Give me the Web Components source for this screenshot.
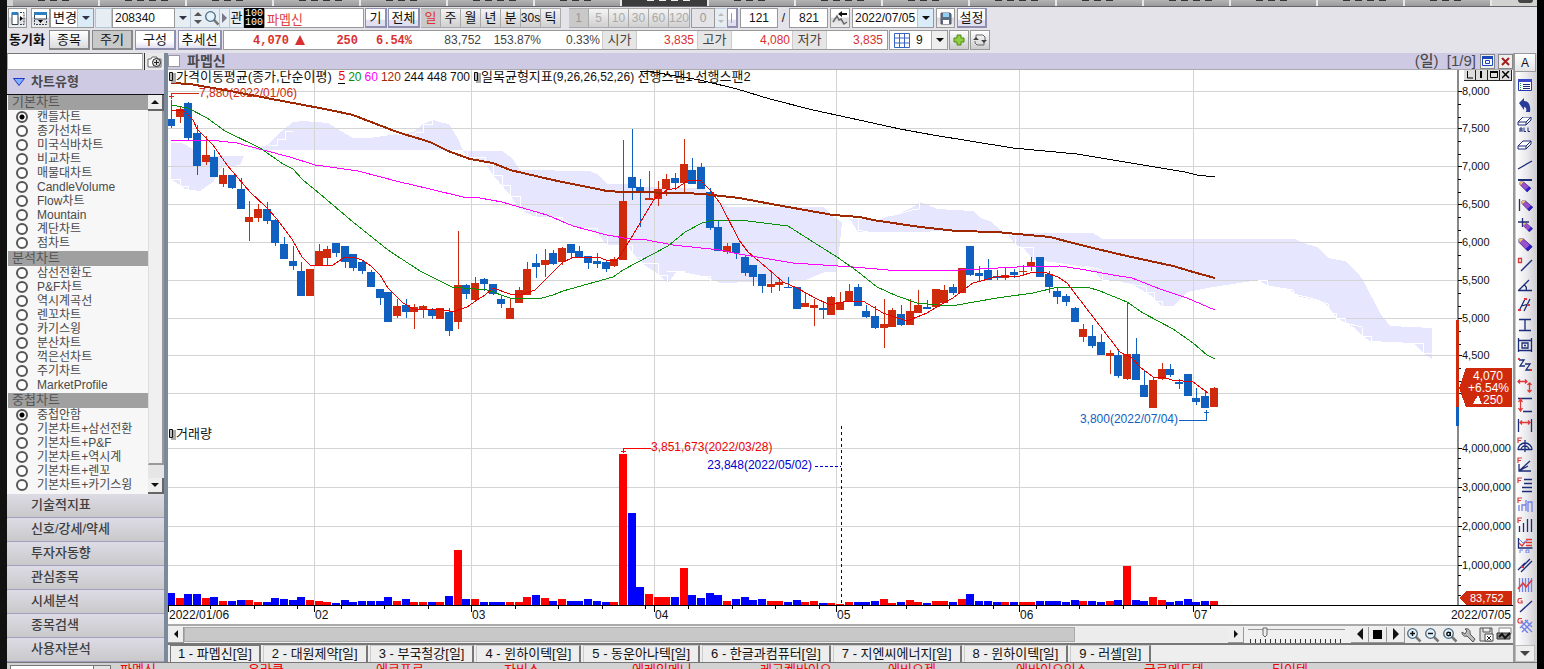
<!DOCTYPE html>
<html lang="ko">
<head>
<meta charset="utf-8">
<title>종합차트</title>
<style>
html,body{margin:0;height:100%;background:#000}
body{font:12px/14px "Liberation Sans","Noto Sans CJK KR",sans-serif;color:#111;overflow:hidden}
</style>
</head>
<body>
<hts-app></hts-app>
<script>
const base = `
*{box-sizing:border-box}
button,input,select{font:inherit;color:inherit;margin:0;padding:0;border-radius:0;outline:0}
button{display:flex;align-items:center;justify-content:center;white-space:nowrap;overflow:hidden;cursor:pointer}
select{appearance:none;background:none;border:0}
svg{display:block;flex:none}
.ko{font-size:13px}
`;
const define = (name, css, html, ready) => customElements.define(name, class extends HTMLElement {
  constructor() {
    super();
    this.attachShadow({mode: 'open'}).innerHTML = `<style>${base}${css}</style>${html}`;
  }
  connectedCallback() { if (ready) ready(this, this.shadowRoot); }
});
const tri = (dir, w = 8, c = '#111') => {
  const h = w / 2;
  const d = {down: `M0 0H${w}L${h} ${h}z`, up: `M0 ${h}H${w}L${h} 0z`, left: `M${h} 0V${w}L0 ${h}z`, right: `M0 0V${w}L${h} ${h}z`}[dir];
  const v = dir === 'down' || dir === 'up';
  return `<svg width="${v ? w : h}" height="${v ? h : w}"><path d="${d}" fill="${c}"/></svg>`;
};

/* Menu tabs along the upper edge */
define('menu-tabs', `
:host{display:flex;height:7px;background:#d2d2d0;border-bottom:1px solid #666;padding-left:6px;overflow:hidden}
i{flex:0 1 87px;border-right:2px solid #e8e8e8;background:linear-gradient(#b4b4b4,#9a9a9a);display:flex;gap:5px;padding-left:25px}
i.on{background:#3c3c3c} b{width:7px;height:1px;background:#333} i.on b{background:#eee}
u{flex:none;width:15px;height:3px;margin-left:26px;border-radius:0 0 4px 4px;background:#444}`,
  Array.from({length: 17}, (_, n) => `<i class="${n === 7 ? 'on' : ''}">${'<b></b>'.repeat(3 + n % 2)}</i>`).join('') + '<u></u>');

/* Code, period and range controls */
const mag = (inner = '') => `<svg width="16" height="16" viewBox="0 0 16 16"><path d="M9.500 9.500l5 5" stroke="#777" stroke-width="2.500"/><circle cx="6.500" cy="6.500" r="4.800" fill="#e4f2fa" stroke="#4a6a80" stroke-width="1.300"/>${inner}</svg>`;
define('code-toolbar', `
:host{display:flex;height:20px;padding-left:1px;white-space:nowrap}
:host>*{flex:none}
.g1{width:1px}.g2{width:2px}.g4{width:4px}.g8{width:8px}
button{background:linear-gradient(#fff 45%,#d9d9dc 50%,#eee);border:1px solid #999;height:20px}
button.p{border-color:#8f8fb0;border-width:1px 2px 2px 1px;background:linear-gradient(#fff 60%,#e0e0f2 65%)}
input{width:100%;border:1px solid #999;background:#fff;height:20px;padding:0 4px}
.combo{position:relative;display:flex;border:1px solid #999;background:#fff;height:20px}
.combo select{width:100%;padding-left:2px}
.combo i{position:absolute;right:0;top:0;bottom:0;width:16px;background:#d9ecf8;border-left:1px solid #b5c6d2;display:grid;place-items:center;pointer-events:none}
.grp{display:flex}.grp button{width:20px;border-width:1px 1px 1px 0;border-color:#aaa;background:linear-gradient(#f4f4f4,#d0d0d0)}
.grp button.on{background:#c9c9c9;color:#e03030}
.grp.off button{color:#aaa}.grp.off button.on{color:#999}
.spin{display:flex;flex-direction:column;justify-content:space-evenly;align-items:center;background:#e6eef4;border:1px solid #b5c6d2;border-width:1px 0}
.flat{background:#e6eef4;border:1px solid #b5c6d2;border-width:1px 1px 1px 0}
.inv{background:#000;color:#fff;font:10px/9px "Liberation Mono",monospace;text-align:center;padding-top:1px}`, `
<button style="width:19px" aria-label="왼쪽 창"><svg width="15" height="15"><path d="M2 1.500h6v12H2z" fill="#fff" stroke="#345"/><path d="M2 1h6v3H2z" fill="#2c7fc0"/><path d="M10 1.500h4v12h-4" fill="none" stroke="#345" stroke-dasharray="2 1"/><path d="M10 5l3 2.500-3 2.500z"/></svg></button><span class="g4"></span>
<button style="width:19px" aria-label="위쪽 창"><svg width="15" height="15"><path d="M1.500 2h12v6h-12z" fill="#fff" stroke="#345"/><path d="M1 1h13v3H1z" fill="#2c7fc0"/><path d="M1.500 9v4.500h12V9" fill="none" stroke="#345" stroke-dasharray="2 1"/><path d="M5 9h5l-2.500 3z"/></svg></button>
<label class="combo" style="width:44px"><select class="ko" aria-label="변경"><option>변경</option></select><i>${tri('down', 8, '#334')}</i></label><span class="g1"></span>
<span class="flat" style="width:17px;border-left-width:1px"></span>
<span style="width:63px"><input aria-label="종목코드" value="208340" style="padding:0 2px"></span>
<button class="flat" style="width:16px" aria-label="목록">${tri('down', 8, '#334')}</button>
<span class="spin" style="width:14px">${tri('up', 8, '#555')}${tri('down', 8, '#555')}</span>
<button class="flat" style="width:15px" aria-label="검색">${mag()}</button>
<button class="flat" style="width:10px" aria-label="다음">${tri('right', 10, '#778')}</button>
<button class="flat ko" style="width:14px">관</button>
<span class="inv" style="width:20px">100<br>100</span>
<span style="width:100px"><input class="ko" aria-label="종목명" value="파멥신" style="color:#e04040;padding:0 2px"></span><span class="g1"></span>
<button class="p ko" style="width:22px">기</button><span class="g1"></span>
<button class="p ko" style="width:32px">전체</button><span class="g1"></span>
<span class="grp"><button class="on ko">일</button><button class="ko">주</button><button class="ko">월</button><button class="ko">년</button><button class="ko">분</button><button>30s</button><button class="ko">틱</button></span><span class="g8"></span>
<span class="grp off"><button class="on">1</button><button>5</button><button>10</button><button>30</button><button>60</button><button style="width:21px">120</button></span><span class="g1"></span>
<span style="width:24px"><input aria-label="틱 값" value="0" style="background:#e4e4e8;color:#999;text-align:center"></span>
<span class="spin" style="width:11px">${tri('up', 6, '#bbb')}${tri('down', 6, '#bbb')}</span><span class="g1"></span>
<button class="p" style="width:11px" aria-label="이동"><svg width="2" height="10"><path d="M0 0h1v10H0z" fill="#99a"/></svg></button><span class="g2"></span>
<span style="width:38px"><input aria-label="표시 개수" value="121" style="text-align:center"></span>
<span style="width:11px;text-align:center;line-height:20px">/</span>
<span style="width:39px"><input aria-label="전체 개수" value="821" style="text-align:right;padding-right:8px"></span><span class="g2"></span>
<button style="width:20px" aria-label="되돌리기"><svg width="16" height="16"><path d="M1 12l4-6 2 4 2-1 3 5 3-2" fill="none" stroke="#666" stroke-width="1.500"/><path d="M8 4h7" stroke="#111" stroke-width="2"/><path d="M6 4l4-3v6z" fill="#111"/></svg></button><span class="g2"></span>
<label class="combo" style="width:82px"><select aria-label="날짜"><option>2022/07/05</option></select><i>${tri('down')}</i></label><span class="g2"></span>
<button style="width:19px" aria-label="저장"><svg width="12" height="13"><path d="M1 1h9l1 1v10H1z" fill="#5d6c80" stroke="#556"/><path d="M3 1h6v4H3z" fill="#8fd0f4"/><path d="M3 8h6v4H3z" fill="#fff"/></svg></button><span class="g2"></span>
<button class="p ko" style="width:30px">설정</button>`);

/* Price summary line */
define('quote-bar', `
:host{display:flex;height:20px;white-space:nowrap;line-height:18px}
:host>*{flex:none}
.sync{width:42px;font-weight:bold;padding-left:2px;line-height:20px}
.b{display:flex;gap:2px}
.b button{height:20px;width:41px;background:linear-gradient(#fff,#dcdce0);border:1px solid #888;border-width:1px 2px 2px 1px}
.b button.on{background:#c9c9c9}.b button.p{background:linear-gradient(#fff 60%,#e0e0f2);border-color:#8f8fb0}.b button.w{width:44px}
.q{display:flex;width:665px;margin-left:1px;background:#fff;border:1px solid #999;color:#444}
.q span{text-align:right}
.red{color:#d83030}.bold{font:bold 12px/20px "Liberation Mono",monospace;color:#d83030}
.q .l{width:35px;text-align:center;background:#e6e6e6;border:1px solid #ccc;border-width:0 1px}
.c{position:relative;width:59px;border:1px solid #999;background:#fff;display:flex;align-items:center;padding-left:4px}
.c select{width:48px;padding-left:6px}.c i{position:absolute;right:0;top:0;bottom:0;width:16px;border-left:1px solid #aaa;background:#eee;display:grid;place-items:center;pointer-events:none}
.n{width:20px;height:20px;background:linear-gradient(#fff,#ccc);border:1px solid #999;margin-left:1px}`, `
<span class="sync ko">동기화</span>
<span class="b ko"><button>종목</button><button class="on">주기</button><button class="p">구성</button><button class="p w">추세선</button></span>
<div class="q"><span class="bold" style="width:65px">4,070</span><span style="width:16px;display:grid;place-items:center end"><svg width="10" height="10"><path d="M5 0l5 10H0z" fill="#d83030"/></svg></span><span class="bold" style="width:53px">250</span><span class="bold" style="width:54px">6.54%</span><span style="width:69px">83,752</span><span style="width:60px">153.87%</span><span style="width:59px">0.33%</span><span style="width:2px"></span><span class="l ko">시가</span><span class="red" style="width:57px">3,835</span><span style="width:3px"></span><span class="l ko">고가</span><span class="red" style="width:58px">4,080</span><span style="width:2px"></span><span class="l ko">저가</span><span class="red" style="width:56px">3,835</span></div>
<label class="c" style="margin-left:1px"><svg width="16" height="15"><path d="M.5.500h15v14H.500zM5.500 0v15M10.500 0v15M0 5h16M0 10h16" fill="none" stroke="#3a62c8"/></svg><select aria-label="화면 개수"><option>9</option></select><i>${tri('down')}</i></label>
<button class="n" aria-label="추가"><svg width="12" height="12"><path d="M4 1h4v3h3v4H8v3H4V8H1V4h3z" fill="#8fd03c" stroke="#4b8a1c"/></svg></button>
<button class="n" aria-label="새로고침"><svg width="14" height="14"><path d="M3 6V2h7l2 2v3M11 8v4H4l-2-2V8" fill="none" stroke="#666"/><path d="M0 7h6L3 4zM8 7h6l-3 3z" fill="#444"/></svg></button>`);

/* Chart type list and accordion */
const groups = [
  ['기본차트', ['캔들차트', '종가선차트', '미국식바차트', '비교차트', '매물대차트', 'CandleVolume', 'Flow차트', 'Mountain', '계단차트', '점차트']],
  ['분석차트', ['삼선전환도', 'P&amp;F차트', '역시계곡선', '렌꼬차트', '카기스윙', '분산차트', '꺽은선차트', '주기차트', 'MarketProfile']],
  ['중첩차트', ['중첩안함', '기본차트+삼선전환', '기본차트+P&amp;F', '기본차트+역시계', '기본차트+렌꼬', '기본차트+카기스윙']]];
define('side-panel', `
:host{display:flex;flex-direction:column;background:#f7f7f7;min-height:0;overflow:hidden;color:#4a4a4a}
.s{display:flex;height:17px;flex:none;background:#e3e3e9}
.s input{flex:1;min-width:0;border:1px solid #aaa;border-top-color:#777;background:#fff}
.s button{width:20px;border:0;border-left:1px solid #333;background:#e9e9ec;margin-left:1px}
h2{margin:0;flex:none;height:25px;background:#cfcae4;border-bottom:1px solid #111;font-size:13px;line-height:22px;padding-left:6px;display:flex;align-items:center;gap:6px}
.list{flex:1 1 0;display:flex;min-height:0}
.in{flex:1;overflow:hidden;padding-left:1px}
fieldset{border:0;margin:0 0 1px;padding:0;min-width:0}
legend{float:left;width:100%;height:15px;background:#a0a0a0;padding:0 4px;line-height:13px;font-size:13px;color:#555}
label{clear:both;display:flex;align-items:center;height:14px;white-space:nowrap;padding-left:8px;gap:9px}
input[type=radio]{appearance:none;width:12px;height:12px;border:2px solid #555;border-radius:50%;background:#fff;flex:none}
input[type=radio]:checked{background:radial-gradient(#000 0 2px,#fff 3px)}
.sb{width:16px;display:flex;flex-direction:column;background:#f0f0f0}
.sb button{height:16px;flex:none;background:#eee;border:1px solid #666;border-width:0 2px 2px 0}
.sb i{flex:1;border:1px solid #999;border-width:0 2px 2px 1px;border-left-color:#ddd;background:#f0f0f0}.sb b{height:13px;background:#e6e6e6}
.acc{flex:none}.acc button{width:100%;height:24px;border:0;border-bottom:1px solid #a39fc0;background:linear-gradient(#dddbe4,#c9c9cb);justify-content:flex-start;padding-left:24px;padding-bottom:2px;font-size:13px;font-weight:500;color:#3f3f3f}`, `
<div class="s"><input aria-label="차트 검색"><button aria-label="검색"><svg width="16" height="13"><path d="M1 4h3l1-2h5v2h4v8H1z" fill="#fff" stroke="#666"/><circle cx="9.500" cy="7.500" r="4" fill="#ddd" stroke="#222"/><path d="M7 7.500h5M9.500 5v5" stroke="#222"/></svg></button></div>
<h2><svg width="12" height="9"><path d="M.5.500h11l-5.500 7z" fill="#7fb0ff" stroke="#2038c0"/></svg>차트유형</h2>
<div class="list"><div class="in">${groups.map(([t, a], g) => `<fieldset><legend>${t}</legend>${a.map((s, n) => `<label><input type="radio" name="g${g}" ${n || g === 1 ? '' : 'checked'}>${s}</label>`).join('')}</fieldset>`).join('')}</div>
<div class="sb"><button aria-label="위로">${tri('up')}</button><i></i><b></b><button aria-label="아래로">${tri('down')}</button></div></div>
<div class="acc">${['기술적지표', '신호/강세/약세', '투자자동향', '관심종목', '시세분석', '종목검색', '사용자분석'].map(s => `<button>${s}</button>`).join('')}</div>`);

/* Daily bars: direction, high, body top, body bottom, low */
const bars = `b100,119,126,128 r107,109,117,123 b102,103,138,141 b125,133,166,175 r136,155,162,165 b150,157,177,177 r168,175,184,187 b175,175,188,189 b178,189,209,209 r201,217,222,241 r204,209,218,222 b202,209,221,224 b219,220,243,246 b237,244,259,259 b246,261,266,270 b262,271,296,296 r269,269,296,296 r244,251,266,266 r246,249,258,266 b243,243,253,257 b246,246,262,268 b254,254,268,271 b260,262,271,274 b270,272,287,287 b289,289,298,305 b292,292,322,322 r299,306,316,318 b299,305,312,318 r304,307,312,329 r305,306,309,318 b308,309,316,319 r308,308,319,319 b308,312,331,336 r231,285,322,329 b284,285,294,299 r277,283,300,302 b278,279,284,291 b284,284,294,295 b296,299,304,308 r298,308,319,319 r287,290,303,303 r262,269,295,295 b254,263,267,278 r249,260,265,277 b250,253,264,265 r247,248,262,265 b244,244,253,258 b246,251,257,257 b256,256,263,269 b253,261,264,268 b261,262,269,272 r257,259,266,267 r140,201,260,260 b129,177,188,200 b179,187,191,227 r171,198,200,200 r181,189,199,206 r174,179,189,196 b173,178,183,190 r139,164,183,193 b158,170,184,184 b163,167,189,189 b188,192,228,230 b221,227,251,251 r243,246,252,254 b243,243,253,259 b255,257,273,276 b265,265,277,286 b274,274,286,293 r272,284,287,293 r278,282,285,291 b277,287,288,288 b287,287,309,309 r293,303,307,307 r299,305,308,326 b302,308,310,319 r296,297,315,315 r292,302,310,310 r284,291,302,302 b284,287,306,306 b305,311,317,318 b306,316,328,329 r299,324,328,348 r308,310,327,327 b305,314,325,326 r299,311,325,325 r290,305,313,313 b300,307,309,309 r289,289,307,307 r285,290,303,303 b284,287,293,295 r268,268,293,293 b246,246,275,276 b266,273,276,281 b259,270,280,280 b270,276,278,280 r267,275,278,280 b269,272,275,278 r265,271,272,276 r257,262,267,271 b257,257,277,277 b271,274,287,293 b287,291,297,304 b294,296,302,306 b307,308,322,322 r324,329,337,342 b325,336,346,348 b334,342,355,355 r350,353,356,374 b350,355,376,378 r302,354,379,380 b338,354,380,380 b371,385,397,397 r378,380,408,408 r363,369,379,380 b364,369,375,377 b379,382,384,389 b374,374,396,396 b388,398,402,405 b390,396,408,408 r387,388,407,407`.split(' ');
const volumes = 'b12 r7 b11 b11 r7 b8 r4 b4 b5 r5 r3 b3 b7 b6 b5 b8 r5 r4 r3 b2 b5 b3 b4 b4 b4 b8 r4 b6 r3 r3 b3 r3 b9 r55 b6 r6 b3 b3 b3 r3 r3 r8 b10 r7 b4 r6 b4 b4 b6 b4 b3 r3 r151 b92 b18 r11 r8 r8 b8 r37 b10 b7 b12 b10 r4 b6 b8 b5 b6 r4 r4 b3 b5 r3 r4 b2 r2 r1 r3 b3 b3 b4 r6 r2 b3 r5 r3 b2 r4 r4 b3 r6 b11 b4 b4 b3 r3 b3 r3 r3 b4 b4 b4 b3 b5 r4 b4 b3 r4 b5 r39 b5 b4 r8 r5 b3 b4 b6 b3 b4 r4'.split(' ');
const lines = [
  ['#000', 1, '640,71 648,71 670,75 700,80 737,89 770,99 813,110 850,118 900,129 933,135 1013,148 1077,154 1119,161 1185,172 1197,175 1215,177'],
  ['#a02800', 2, '171,83 190,84 230,91 277,100 330,110 353,115 397,132 430,142 448,151 470,159 493,163 510,170 553,180 607,191 623,192 687,193 713,195 739,198 788,207 833,215 860,217 873,220 920,227 957,231 997,232 1017,234 1050,237 1073,243 1097,249 1127,256 1173,266 1193,272 1215,278'],
  ['#f0f', 1, '171,140 210,140 237,143 263,150 290,157 315,165 330,167 358,171 400,182 430,189 463,197 480,198 502,202 547,215 573,226 607,235 630,239 647,240 673,245 720,250 739,254 793,263 853,267 900,271 960,270 1017,267 1060,266 1080,269 1119,276 1132,278 1160,289 1187,298 1215,310'],
  ['#089008', 1, '171,105 188,108 207,118 225,131 260,148 283,164 293,169 303,180 320,194 353,222 388,250 420,271 452,287 487,290 510,298 520,299 542,298 553,295 563,291 613,277 623,270 653,254 668,246 685,232 702,223 713,220 740,220 788,226 810,240 837,257 857,271 877,287 897,296 917,303 938,305 957,305 997,298 1033,293 1058,287 1087,287 1100,291 1127,302 1143,313 1173,329 1193,343 1207,355 1215,359'],
  ['#e80000', 1, '171,110 183,110 193,120 197,129 213,145 227,165 238,178 250,192 266,207 277,219 292,239 302,257 311,266 333,265 345,257 353,257 362,260 371,266 380,275 388,288 403,303 414,309 427,310 440,309 453,312 467,307 477,300 485,295 493,288 510,294 523,294 535,290 547,278 563,262 572,258 598,257 606,260 617,260 630,240 640,223 655,198 667,190 677,188 687,181 700,180 710,190 720,203 739,240 748,252 767,268 783,282 797,288 815,298 830,305 843,302 863,301 883,313 907,321 927,313 940,305 953,298 973,283 1000,276 1020,276 1033,272 1047,273 1058,277 1067,283 1090,313 1120,352 1132,358 1140,367 1153,377 1163,377 1172,380 1193,382 1208,393']];
const clouds = [
  '171,143 182,143 193,149 203,156 244,156 240,165 222,167 213,182 200,191 185,189 171,179',
  '247,153 253,149 268,145 277,135 293,122 303,121 328,123 353,138 370,138 397,134 413,132 423,124 433,120 442,123 449,124 457,137 463,150 253,150',
  '463,151 502,151 512,158 520,170 590,171 597,174 607,184 627,184 640,187 703,188 715,200 728,207 823,207 835,218 842,222 837,272 825,272 803,281 763,283 753,282 720,283 707,277 677,271 668,283 658,274 640,262 627,245 607,245 597,233 577,227 560,218 537,217 520,210 510,195 493,175 483,160 467,157',
  '850,219 877,220 900,213 913,207 920,202 928,205 937,209 973,211 980,218 990,221 1002,231 858,232',
  '1007,233 1093,233 1103,239 1295,239 1303,243 1317,247 1328,258 1345,261 1357,272 1363,280 1380,313 1390,326 1432,328 1432,359 1423,353 1413,343 1370,341 1363,336 1353,327 1337,318 1327,305 1320,301 1300,297 1290,290 1267,285 1258,280 1233,284 1207,288 1187,292 1173,306 1162,306 1150,295 1137,287 1120,281 1102,280 1090,268 1060,263 1033,260 1023,247 1015,245'];
const steps = ['171,179 180,179 180,186 188,186 188,190', '268,145 277,145 277,139 285,139 285,131 293,131', '397,134 415,134 415,132 423,132 423,124 432,124 432,119', '467,150 467,157 485,157 485,164 493,164 493,175 502,175 502,185 510,185 510,196 520,196 520,210 536,210 536,217 562,217 562,224 580,228 597,228 597,233 607,233 607,245 632,245 632,257 641,257 641,263 658,263 658,275 667,275 667,283', '667,271 684,271 684,276 710,276 710,281', '890,216 902,213 912,210 919,209 919,201', '858,219 858,230 868,232', '1002,231 1015,236 1015,247 1033,247 1033,260', '1085,266 1102,270 1102,280 1130,284 1146,287 1146,292 1154,292 1154,301 1162,301 1162,306', '1258,280 1267,280 1267,286 1293,290 1293,294 1311,298 1328,304 1328,313 1336,313 1336,318 1345,318 1345,323 1362,327 1362,336 1371,336 1371,341', '1410,343 1423,343 1423,353 1432,353'];

function drawChart(host, root) {
  const w = host.clientWidth, h = host.clientHeight;
  const kx = (w - 56) / 1289, ky = h / 554, ax = w - 56;
  const X = x => Math.round((x - 168) * kx), Y = y => Math.round((y - 70) * ky);
  const bar = i => X(171 + 8.69 * i);
  const P = s => s.split(' ').map(p => { const [a, b] = p.split(','); return X(+a) + ',' + Y(+b); }).join(' ');
  const T = (x, y, s, fill = '#111', extra = '') => `<text x="${x}" y="${y + 4}" fill="${fill}" ${extra}>${s}</text>`;
  const up = '#d02a0c', dn = '#1060c0';
  let o = '';
  clouds.forEach(c => o += `<polygon points="${P(c)}" fill="#e6e6ff"/>`);
  const rows = [91, 128, 166, 204, 242, 280, 318, 355, 393, 448, 487, 526, 565];
  rows.forEach(y => o += `<rect x="0" y="${Y(y)}" width="${ax}" height="1" fill="#d4d4d4"/>`);
  [314, 471, 654, 836, 1019, 1193].forEach(x => o += `<rect x="${X(x)}" y="0" width="1" height="${Y(605)}" fill="#d4d4d4"/>`);
  steps.forEach(c => o += `<polyline points="${P(c)}" fill="none" stroke="#fff"/>`);
  const bw = Math.max(2, Math.round(8 * kx));
  bars.forEach((b, i) => {
    const c = b[0] === 'r' ? up : dn, [hi, t, d, lo] = b.slice(1).split(',').map(v => Y(+v)), x = bar(i);
    o += `<path d="M${x} ${hi}h1V${lo}h-1zM${x - 4} ${t}h${bw}V${Math.max(d, t + 1)}h-${bw}z" fill="${c}"/>`;
  });
  lines.forEach(([c, s, p]) => o += `<polyline points="${P(p)}" fill="none" stroke="${c}" stroke-width="${s}"/>`);
  volumes.forEach((v, i) => {
    const t = Y(605 - v.slice(1)), x = bar(i);
    o += `<rect x="${x - 4}" y="${t}" width="${bw}" height="${Y(605) - t}" fill="${v[0] === 'r' ? '#f00' : '#00f'}"/>`;
  });
  /* axes */
  o += `<rect x="${ax}" y="0" width="2" height="${Y(605)}" fill="#888"/><rect x="0" y="${Y(605)}" width="${w}" height="1" fill="#000"/>`;
  const names = ['8,000', '7,500', '7,000', '6,500', '6,000', '5,500', '5,000', '4,500', '', '4,000,000', '3,000,000', '2,000,000', '1,000,000'];
  rows.forEach((y, i) => {
    o += `<rect x="${ax + 1}" y="${Y(y)}" width="4" height="1"/>` + T(ax + 5, Y(y), names[i], '#111', 'class="a"');
    if (i !== 8) for (let k = 1; k < (i > 8 ? 4 : 3); k++) o += `<rect x="${ax + 1}" y="${Y(y + k * (i > 8 ? 10 : 13))}" width="3" height="1"/>`;
  });
  for (let i = 0; i < 121; i += 5) o += `<rect x="${bar(i) - 4}" y="${Y(605)}" width="1" height="4"/>`;
  [['2022/01/06', 168], ['02', 314], ['03', 471], ['04', 654], ['05', 836], ['06', 1019], ['07', 1193]].forEach(([s, x]) => o += `<rect x="${X(x)}" y="${Y(605)}" width="1" height="7"/>` + T(X(x) + 1, Y(615), s));
  o += T(w - 2, Y(615), '2022/07/05', '#111', 'text-anchor="end"');
  /* current price markers */
  o += `<rect x="${ax - 1}" y="${Y(320)}" width="3" height="${Y(407) - Y(320)}" fill="${up}"/><rect x="${ax - 1}" y="${Y(407)}" width="3" height="${Y(426) - Y(407)}" fill="${dn}"/>`;
  const m = Y(388);
  o += `<path d="M${ax + 2} ${m}L${ax + 9} ${m - 20}H${w - 1}V${m + 19}H${ax + 9}z" fill="${up}"/>` + T(ax + 16, m - 12, '4,070', '#fff') + T(ax + 11, m, '+6.54%', '#fff') + T(ax + 26, m + 12, '250', '#fff') + `<path d="M${ax + 16} ${m + 16}h9l-4-9z" fill="#fff"/>`;
  const v = Y(598);
  o += `<path d="M${ax + 2} ${v}l7-7H${w - 1}v14H${ax + 9}z" fill="${up}"/>` + T(ax + 13, v, '83,752', '#fff', 'class="a"');
  /* extremes */
  o += `<path d="M${X(171)} ${Y(99)}v-5.500h28M${X(171) - 2} ${Y(96)}h5" fill="none" stroke="${up}"/>` + T(X(199), Y(93), '7,880(2022/01/06)', up);
  o += `<path d="M${X(1179)} ${Y(420)}h27v-10M${X(1206) - 2} ${Y(412)}h5" fill="none" stroke="${dn}"/>` + T(X(1178), Y(419), '3,800(2022/07/04)', dn, 'text-anchor="end"');
  o += `<path d="M${X(623)} ${Y(453)}v-5h28M${X(623) - 2} ${Y(451)}h5" fill="none" stroke="#f00"/>` + T(X(651), Y(447), '3,851,673(2022/03/28)', '#e00');
  o += T(X(812), Y(465), '23,848(2022/05/02)', '#00c', 'text-anchor="end"') + `<path d="M${X(815)} ${Y(466)}H${X(841)}" stroke="#00c" stroke-dasharray="3 2"/><path d="M${X(841)} ${Y(426)}V${Y(605)}" stroke="#006" stroke-dasharray="3 3"/>`;
  root.querySelector('svg.c').innerHTML = o;
}
const paneButtons = last => `<button aria-label="L"><svg width="9" height="8"><path d="M2.500 0v7H8" fill="none" stroke="#000"/></svg></button><button aria-label="I"><svg width="3" height="8"><path d="M0 0h2v7H0z"/></svg></button><button aria-label="최대화"><svg width="8" height="8"><path d="M.5 1.500h7v5h-7z" fill="none" stroke="#000"/><path d="M0 0h8v2H0z"/></svg></button><button aria-label="닫기"><svg width="8" height="8"><path d="M0 0l7 7M7 0L0 7" stroke="${last}" stroke-width="1.500"/></svg></button>`;
const handle = '<svg width="8" height="12"><path d="M3 2h5v10H3z" fill="#aaa"/><path d="M1.500 1.500h3v8h-3z" fill="#bbb" stroke="#111"/></svg>';
define('stock-chart', `
:host{display:block;position:relative;flex:1 1 0;min-height:0;background:#fff;overflow:hidden}
svg.c{position:absolute;inset:0;width:100%;height:100%;shape-rendering:crispEdges;font-size:12px}
svg.c .a{font-size:11px}
.lg{position:absolute;left:0;top:0;display:flex;align-items:center;height:13px;white-space:nowrap}
.lg em{font-style:normal;margin-right:3px}
.v{top:64.500%}
.pb{position:absolute;right:1px;top:0;display:flex}
.pb button{width:12px;height:11px;background:#ddd;border:1px solid #222;border-width:0 1px 1px 0}`, `
<svg class="c" role="img" aria-label="일봉 차트"></svg>
<div class="lg">${handle}<span class="ko">가격이동평균(종가,단순이평)</span>&nbsp;&nbsp;<em style="color:#e00;border-bottom:1px solid #000">5</em><em style="color:#089008">20</em><em style="color:#f0f">60</em><em style="color:#a02800">120</em><em>244</em><em>448</em><em>700</em>${handle}<span class="ko">일목균형지표</span><span>(9,26,26,52,26)</span>&nbsp;<em class="ko">선행스팬1</em><span class="ko">선행스팬2</span></div>
<div class="lg v">${handle}<span class="ko">거래량</span></div>
<div class="pb">${paneButtons('#999')}</div><div class="pb v">${paneButtons('#000')}</div>`,
(host, root) => { drawChart(host, root); new ResizeObserver(() => drawChart(host, root)).observe(host); });

/* Title, plot, scroll line and stock tabs */
define('chart-window', `
:host{display:flex;flex-direction:column;min-width:0;min-height:0}
.t{flex:none;display:flex;align-items:center;height:17px;background:#cfcae4;border-bottom:1px solid #aaa;font-size:14px;color:#4a4a4a}
.t b{margin:0 auto 0 7px}.t span{font-size:15px;font-weight:500}.t input{width:12px;height:12px;margin:0;appearance:none;background:#fff;border:1px solid #999}
.t button{width:15px;height:15px;margin-left:3px;background:#eee;border:1px solid #888}
.sc{flex:none;display:flex;align-items:center;height:19px;background:#f0f0f0;border-top:2px solid #aaa}
.sc button{background:#eee;border:1px solid #999;border-width:0 1px 1px 0;height:16px;width:16px;flex:none}
.th{flex:0 1 895px;height:15px;background:#c8c8c8;border:1px solid #aaa}.tr{flex:0 1 154px;height:15px;background:#ececec}
.sc .z{width:18px;border:0}
.tabs{flex:none;display:flex;gap:2px;height:19px;background:#eee;border-top:2px solid #777;padding-left:2px;overflow:hidden;font-size:13px}
.tabs button{padding:0 8px;border:1px solid #ccc;border-width:1px 2px 0 1px;border-right-color:#777;background:#eee;height:17px;flex:none}
.tabs button.on{border-color:#777;padding:0 7px}`, `
<div class="t"><input type="checkbox" aria-label="선택"><b>파멥신</b><span>(일)&nbsp; [1/9]</span><button style="margin-left:4px" aria-label="창"><svg width="11" height="11"><path d="M.500.500h10v9H.500z" fill="#fff" stroke="#1a48b8"/><path d="M0 0h11v3H0z" fill="#1a48b8"/><path d="M3.500 4.500h4v3h-4z" fill="none" stroke="#1a48b8"/></svg></button><button aria-label="닫기"><svg width="9" height="9"><path d="M1 1l7 7M8 1L1 8" stroke="#a02020" stroke-width="2"/></svg></button></div>
<stock-chart></stock-chart>
<div class="sc"><button aria-label="왼쪽">${tri('left')}</button><div class="th"></div><div class="tr"></div><button aria-label="오른쪽">${tri('right')}</button>
<svg width="97" height="16" style="margin:0 6px 0 4px"><path d="M0 2.500h97" stroke="#999"/><path d="M2 14.500h95" stroke="#333" stroke-width="5" stroke-dasharray="1 4"/><path d="M15 1h4v7l-2 2-2-2z" fill="#eee" stroke="#666"/></svg>
<button style="width:18px" aria-label="이전">${tri('left', 12)}</button><button style="width:18px" aria-label="정지"><svg width="9" height="9"><path d="M0 0h9v9H0z"/></svg></button><button style="width:18px" aria-label="재생">${tri('right', 12)}</button>
<button class="z" aria-label="확대">${mag('<path d="M4 6.500h5M6.500 4v5" stroke="#111" stroke-width="1.500"/>')}</button><button class="z" aria-label="축소">${mag('<path d="M4 6.500h5" stroke="#111" stroke-width="1.500"/>')}</button><button class="z" aria-label="자동">${mag('<circle cx="6.500" cy="7" r="1.700" fill="none" stroke="#111" stroke-width="1.500"/><path d="M8.500 5v4" stroke="#111"/>')}</button>
<button class="z" aria-label="도구"><svg width="16" height="16"><path d="M2 5l3 2 2-3-2-2c3-1 6 1 5 5l5 5-2 3-6-6c-3 1-5-1-5-4z" fill="#bbb" stroke="#555"/></svg></button><button class="z" aria-label="저장"><svg width="15" height="15"><path d="M1 1h12v13H1zM4 1v4h7V1" fill="#ddd" stroke="#555"/><path d="M6 7h8v7H6z" fill="#fff" stroke="#444"/><path d="M8 9l4 4M12 9l-4 4" stroke="#222"/></svg></button><button class="z" aria-label="인쇄"><svg width="16" height="15"><path d="M3 1h12v6H3z" fill="#fff" stroke="#888"/><path d="M1 6h13v6H1z" fill="#888" stroke="#333"/><path d="M3 10l3-3 3 4 5-5" fill="none" stroke="#111" stroke-width="2"/></svg></button></div>
<div class="tabs">${['파멥신', '대원제약', '부국철강', '윈하이텍', '동운아나텍', '한글과컴퓨터', '지엔씨에너지', '윈하이텍', '러셀'].map((s, i) => `<button class="${i ? '' : 'on'}">${i + 1} - ${s}[일]</button>`).join('')}</div>`);

/* Drawing tools */
const n = (d, w = 1.3) => `<path d="${d}" fill="none" stroke="#1c2c78" stroke-width="${w}"/>`;
const r = (d, w = 1.3) => `<path d="${d}" fill="none" stroke="#e03838" stroke-width="${w}"/>`;
const v = (d, w = 1.3) => `<path d="${d}" fill="none" stroke="#7080e8" stroke-width="${w}"/>`;
const pen = (x, y, s = 1) => `<g transform="translate(${x} ${y}) scale(${s})"><path d="M0 0l4 0 8 7-4 4-8-8z" fill="#9a50cc" stroke="#402878" stroke-width=".8"/><path d="M0 0h4L.5 3.500z" fill="#f8c860"/><path d="M10 5l2 2-4 4-2-2z" fill="#2a20c8"/></g>`;
const F = r('M1 6V1h4M1 3.500h3', 1.2), G = r('M5 1.500H2L1 3v2l1 1h3V4H3.500', 1.2);
const eraser = y => `<path d="M1 ${y + 6}l5-5h8l-5 5zM1 ${y + 6}v3h8v-3M9 ${y + 9}l5-5v-3" fill="#fff" stroke="#1c2c78"/>`;
const tools = [
  ['목록', '<path d="M1.500 2.500h13v11h-13z" fill="#fff" stroke="#2838b0"/><path d="M1 2h14v3H1z" fill="#3848c8"/>' + n('M6 7.500h7M6 9.500h7M6 11.500h7', 1) + '<path d="M3.500 6v7" stroke="#28a040" stroke-dasharray="1 1"/>'],
  ['실행취소', '<path d="M2 6l5-5v3c5 0 7 5 6 11H9c1-3 0-5-2-5v3z" fill="#283c98"/>'],
  ['전체지우기', eraser(-1) + n('M3 15v-4h2v4M3 13h2M7 10.500V14.500h2M11 10.500v4h2', 1)],
  ['지우개', eraser(3)], ['추세선', n('M1 12L15 4')],
  ['수평선', n('M1 3h14', 2) + pen(3, 5, .9)], ['수직선', n('M2.500 2v12') + pen(5, 4, .9)], ['십자선', n('M1 5h11M5.500 1v9') + pen(6, 6, .8)],
  ['펜', pen(2, 2, 1.100)], ['D선', r('M1.500 1.500h3v4h-3z') + n('M4 14L15 3')],
  ['각도', n('M1 13.500h14M2 13L12 3M7 8c2 1 3 3 2 5')], ['채널', n('M2 14L8 2M7 14l6-12M5 9l6-2') + r('M1 13h3M7 2h3M10 8h3', 2)],
  ['막대', n('M2 2.500h12M8 2v11M2 13.500h12')], ['상자', n('M1.500 1v14M14.500 1v14M2 3.500h12M2 13.500h12M5 6h6v5H5zM7 8.500h2')],
  ['ZZ', n('M2 3h5l-4 6h5M8 7h5l-4 6h5') + r('M1 2h2M13 13h2', 2)], ['화살표', r('M1 4.500h9M3 2.500l-2 2 2 2M8 2.500l2 2-2 2M12.500 6v9M10.500 8l2-2 2 2M10.500 13l2 2 2-2')],
  ['수직거리', n('M1 1.500h14M6 14.500h9') + r('M3.500 2v12M1.500 5l2-3 2 3M1.500 11l2 3 2-3')], ['수평거리', n('M1.500 2v13M14.500 2v13') + r('M3 5.500h10M5 3.500l-2 2 2 2M11 3.500l2 2-2 2')],
  ['피보나치 아크', F + n('M1 13a7 7 0 0 1 14 0M4 13a4 4 0 0 1 8 0M8 3v12M1 12.500h14')], ['피보나치 팬', F + n('M2 7v7h12M2 14L13 4M2 14l9-5')],
  ['피보나치 되돌림', F + n('M7 2.500h8M7 6.500h8M5 10.500h10M5 14.500h10', 1.6)], ['피보나치 목표', F + v('M2 8v6M5 14V8h4M9 14V3M11 15V5h4v10')],
  ['피보나치 시간', F + n('M2.500 9v6M6.500 6v9M10.500 2v13M14.500 2v13')], ['FD', n('M1.500 1v10h14') + r('M2 6l3 3 4-5M9 2.500h6M9 5.500h6M9 8.500h6') + v('M2 2l4 4 5-3M3 16v-3h3M9 13v3h3v-3z', 1)],
  ['피치포크', n('M1 13L8 6M4 15L15 4M6 9l7-7') + r('M4 10h3', 2)], ['회귀', v('M2.500 1v14M5.500 1v14M8.500 1v14M11.500 1v14M14.500 1v14') + r('M1 12l5-6 3 4 6-7', 1.6)],
  ['간선', G + n('M3 15L15 4')], ['간격자', G + v('M5 5l10 10M8 3l7 7M4 9l7 7M15 5L5 15M11 3l-8 8')]];
define('tool-rail', `
:host{display:flex;flex-direction:column;align-items:center;background:linear-gradient(90deg,#999 2px,#fff 3px,#e8e8ec 60%,#ccccd0);min-height:0;overflow:hidden}
.a{width:22px;height:19px;flex:none;border:1px solid #999;background:linear-gradient(#fff,#e4e4e8)}
.l{flex:1 1 0;min-height:0;display:flex;flex-direction:column;padding-top:3px;overflow:hidden}
.l button{width:20px;height:20px;flex:none;border:0;background:none}
.d{width:20px;height:17px;flex:none;border:1px solid #bbb;background:#eee}`,
`<button class="a">A</button><div class="l">${tools.map(([t, p]) => `<button aria-label="${t}"><svg width="16" height="16">${p}</svg></button>`).join('')}</div><button class="d" aria-label="더보기">${tri('down', 10, '#444')}</button>`);

/* Watch list line clipped by the lower window edge */
define('ticker-strip', `
:host{display:flex;height:7px;background:#d2d2d2;border-top:1px solid #777;overflow:hidden;color:#e00;line-height:14px}
i{flex:none;width:101px;height:14px;margin:2px 9px 0 3px;border:1px solid #777;background:linear-gradient(90deg,#fff 82px,#777 82px 83px,#e4e4e4 83px)}
span{flex:0 0 128px;height:14px;white-space:nowrap}`,
'<i></i>' + ['파멥신', '유라클', '에코프로', '자비스', '에레인메니', '레고켐바이오', '에비오젠', '에바이오인스', '글로메드텍', '티이텍'].map(s => `<span class="ko">${s}</span>`).join(''));

define('hts-app', `
:host{display:flex;flex-direction:column;height:100vh;background:#e3e3e9;border:7px solid #000;border-width:0 7px;border-left-color:#111}
.bar{display:flex;flex-direction:column;gap:2px;padding:1px 0 3px}
main{flex:1 1 0;min-height:0;display:grid;grid-template:minmax(0,1fr)/157px 4px minmax(0,1fr) 24px}
.sp{background:#7a8a9c}`,
`<menu-tabs></menu-tabs><div class="bar"><code-toolbar></code-toolbar><quote-bar></quote-bar></div><main><side-panel></side-panel><div class="sp"></div><chart-window></chart-window><tool-rail></tool-rail></main><ticker-strip></ticker-strip>`);
</script>
</body>
</html>
